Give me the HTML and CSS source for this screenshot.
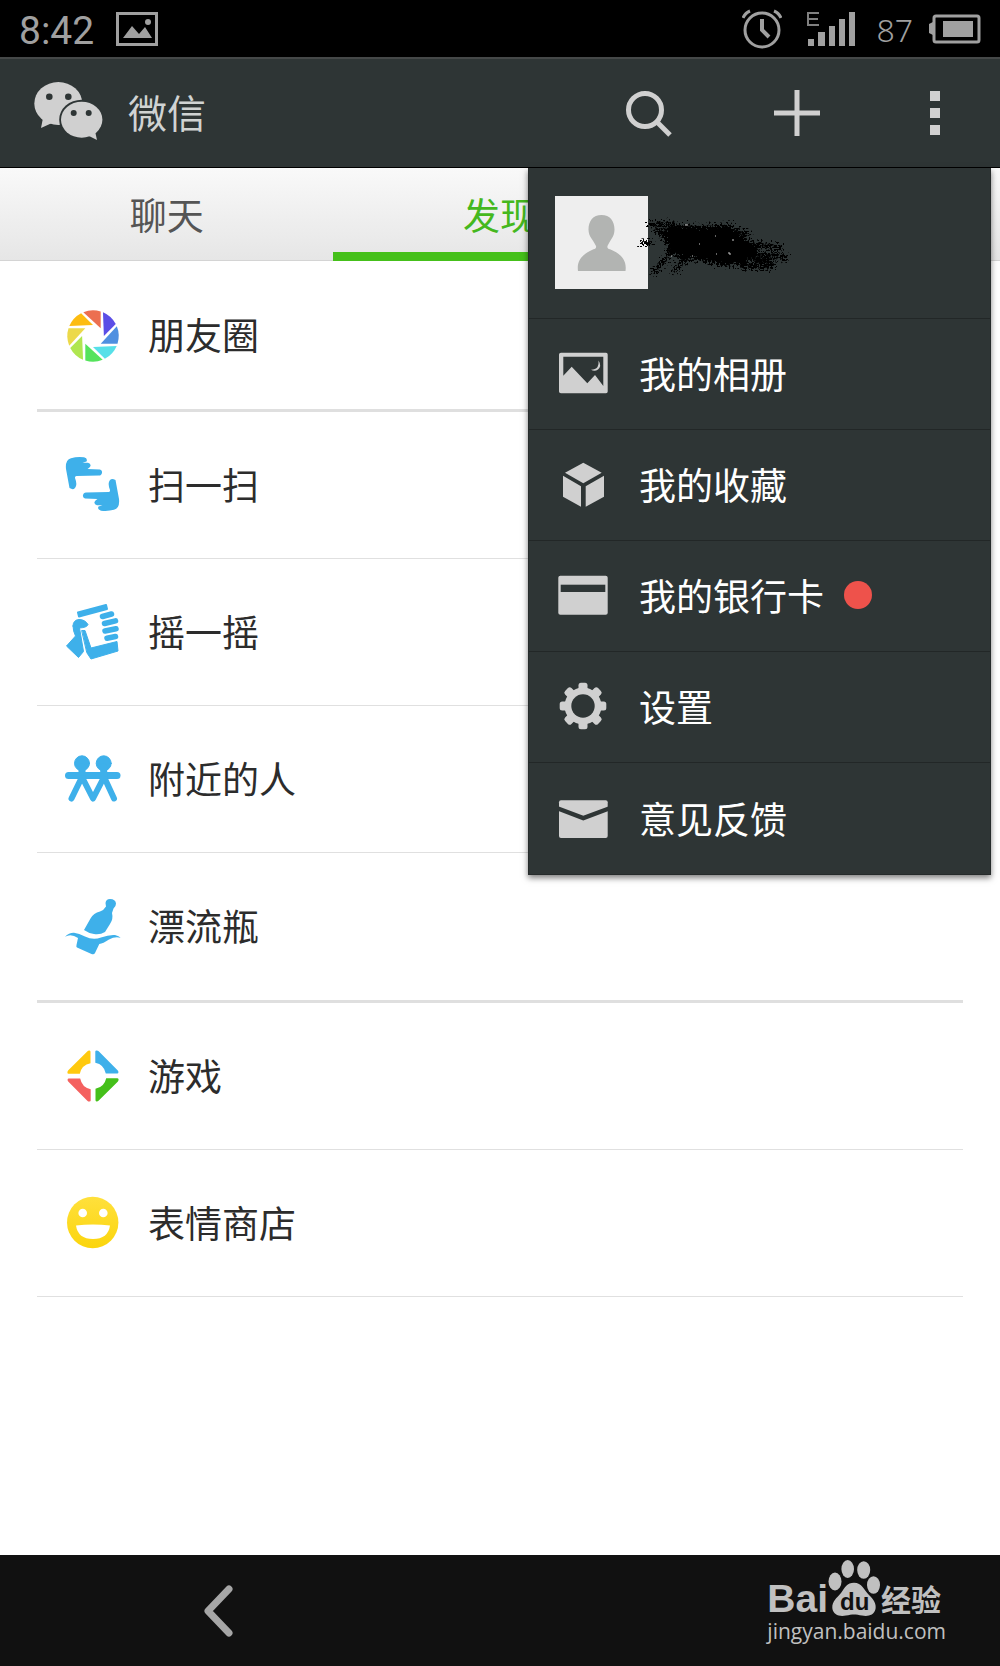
FILE: index.html
```html
<!DOCTYPE html>
<html lang="zh-CN">
<head>
  <meta charset="UTF-8" />
  <meta name="viewport" content="width=device-width, initial-scale=1.0"/>
  <title>微信</title>
  <link rel="stylesheet" href="styles.css">
</head>
<body>
  <div class="status-bar">
    <span class="clock">8:42</span>
    <svg class="status-picture" width="42" height="34" viewBox="0 0 42 34" fill="#a0a0a0">
      <path d="M0 0h42v34H0zM3 3v28h36V3z" fill-rule="evenodd"/>
      <path d="M7 26 16 14l7 8 6-7 7 11z"/>
      <circle cx="32" cy="10" r="3"/>
    </svg>
    <div class="status-right">
      <svg width="40" height="40" viewBox="0 0 40 40" fill="none" stroke="#a0a0a0" stroke-width="3">
        <circle cx="20" cy="21" r="17"/>
        <path d="M20 10v11l7 7" stroke-width="4"/>
        <path d="M1 9Q3 4 8 2M39 9Q37 4 32 2" stroke-width="3"/>
      </svg>
      <svg width="50" height="34" viewBox="0 0 50 34" fill="#a0a0a0">
        <path d="M13 1H2V13H13M2 7H12" fill="none" stroke="#808080" stroke-width="2"/>
        <path d="M2 27h6v7H2zM12 20h7v14h-7zM23 14h6v20h-6zM33 7h6v27h-6zM43 0h6v34h-6z"/>
      </svg>
      <span class="battery-level">87</span>
      <svg width="52" height="30" viewBox="0 0 52 30">
        <rect x="5" y="2" width="45" height="26" rx="2" fill="none" stroke="#a0a0a0" stroke-width="3"/>
        <path d="M4 8 0 10v9l4 2z" fill="#a0a0a0"/>
        <rect x="14" y="7" width="30" height="16" fill="#a0a0a0"/>
      </svg>
    </div>
  </div>

  <header class="app-bar">
    <svg class="logo" width="69" height="59" viewBox="0 0 69 59">
      <g fill="#d0d0d0">
        <ellipse cx="24.3" cy="21.5" rx="24" ry="21.5"/>
        <path d="M9 36 7 46l11-5z"/>
      </g>
      <g fill="#2e3535">
        <circle cx="15.3" cy="14.7" r="3.3"/>
        <circle cx="34.3" cy="14.7" r="3.3"/>
        <ellipse cx="47.7" cy="37.7" rx="22.5" ry="20"/>
      </g>
      <ellipse cx="47.7" cy="37.7" rx="20.7" ry="18" fill="#d0d0d0"/>
      <path d="m55 54 8 4-2-9z" fill="#d0d0d0"/>
      <circle cx="39.7" cy="31" r="3" fill="#2e3535"/>
      <circle cx="54.7" cy="31" r="3" fill="#2e3535"/>
    </svg>
    <h1>微信</h1>
    <button class="bar-button" aria-label="搜索">
      <svg width="48" height="48" viewBox="0 0 48 48" fill="none" stroke="#d0d0d0" stroke-width="5">
        <circle cx="20" cy="21" r="16.5"/>
        <path d="M32 33 45 46"/>
      </svg>
    </button>
    <button class="bar-button" aria-label="添加">
      <svg width="48" height="48" viewBox="0 0 48 48" fill="none" stroke="#d0d0d0" stroke-width="5">
        <path d="M24 1v46M1 24h46"/>
      </svg>
    </button>
    <button class="bar-button more" aria-label="更多">
      <svg width="14" height="46" viewBox="0 0 14 46" fill="#d0d0d0">
        <path d="M1 1h10v10H1zM1 18h10v10H1zM1 35h10v10H1z"/>
      </svg>
    </button>
  </header>

  <div class="content">
    <nav class="tabs">
      <button class="tab">聊天</button>
      <button class="tab active">发现</button>
    </nav>

    <main class="list">
      <a href="#" class="row group-end">
        <svg class="icon" viewBox="-28 -28 56 56">
          <defs><path id="blade" d="M-9.7-23.8A25.7 25.7 0 0 1 7.7-24.5V-7.7Z"/></defs>
          <use href="#blade" fill="#ec6f50"/>
          <use href="#blade" fill="#5b4ee6" transform="rotate(45)"/>
          <use href="#blade" fill="#4f90e0" transform="rotate(90)"/>
          <use href="#blade" fill="#57e0e8" transform="rotate(135)"/>
          <use href="#blade" fill="#55e35c" transform="rotate(180)"/>
          <use href="#blade" fill="#b0e650" transform="rotate(225)"/>
          <use href="#blade" fill="#ecd94a" transform="rotate(270)"/>
          <use href="#blade" fill="#fdbc10" transform="rotate(315)"/>
        </svg>
        <span>朋友圈</span>
      </a>
      <a href="#" class="row">
        <svg class="icon" viewBox="0 0 56 56" fill="#3eb0ea">
          <defs><path id="hand" d="M4.500 31 1 12Q0 3 6 1.200 12-.5 19 .3 23 1.500 21.500 4.500L17.500 5.700H23Q26 6.500 25.500 9 24.500 11 22.500 12L35 12.500Q37.500 13.500 37 15.700 36.500 18.500 34 18.500L11.500 19Q9.800 19 10 21 12 26 11 29 9.500 34 4.500 31Z"/></defs>
          <use href="#hand"/>
          <use href="#hand" transform="rotate(180 27.5 27)"/>
        </svg>
        <span>扫一扫</span>
      </a>
      <a href="#" class="row">
        <svg class="icon" viewBox="0 0 56 56" fill="#3eb0ea" stroke="#3eb0ea" stroke-linejoin="round" stroke-linecap="round">
          <path d="m13 8.500 28-7.500 1 4-28 7.500z" stroke-width="2"/>
          <path d="M8 22Q8 16 14 15.500 20 15.500 23 20.500 22 23.500 14.500 24L18.500 47.500 13.500 53.500 1.500 42 10.500 32Q8 27 8 22Z" stroke-width="1"/>
          <path d="M17 26.500H20L26 44 52 37.500 53 47 26 55 22 49Z" stroke-width="1"/>
          <path d="m37.500 12.500 9-2.500M39.500 19.500l11-2.700M40 27l11-2.300M42 34.300l8.500-1.800" fill="none" stroke-width="5.500"/>
        </svg>
        <span>摇一摇</span>
      </a>
      <a href="#" class="row">
        <svg class="icon" viewBox="0 0 56 56" fill="#3eb0ea" stroke="#3eb0ea" stroke-linecap="round" stroke-linejoin="round">
          <circle cx="17" cy="12.300" r="7.500"/>
          <circle cx="38.700" cy="12.300" r="7.500"/>
          <path d="M3.500 24.500h48.500" stroke-width="7"/>
          <path d="M17 16v12M38.700 16v12" stroke-width="7"/>
          <path d="M16 28 6.500 47.500M18 28l10 19.500L38 28M40 28l9 19.500" fill="none" stroke-width="6"/>
        </svg>
        <span>附近的人</span>
      </a>
      <a href="#" class="row group-end">
        <svg class="icon" viewBox="0 0 56 56" fill="#3eb0ea">
          <path d="M40.500 4Q41 0 45 0 50.500 0 51 4.500 51 7.500 48.500 9.500L47 14Q48.500 20 45 25L40 33Q35 36 29 35 24 34.500 19 31L25.500 19.500Q28.500 14 35 12.500 39 11 41 7.500Z"/>
          <path d="M0 37.700Q4 33.500 9 33.700 14 34.500 20 37.500 28 41.500 36 38.500 44 35.500 50 36 54 37 55.700 38.700 50 37 44 40.500 38 44.500 34.300 45L30 54Q29 56 26.500 55L12 48.500Q11 48 11.500 46L13 39Q6 34 0 37.700Z"/>
        </svg>
        <span>漂流瓶</span>
      </a>
      <a href="#" class="row">
        <svg class="icon" viewBox="-28 -28 56 56">
          <defs><path id="wedge" d="M2.300-24.500Q2.300-25.700 3.800-25.600 4.800-25.500 5.700-24.700L24.800-5.500Q25.600-4.600 25.400-3.500 25.200-2.500 24.300-2.500H12.800A13.500 13.500 0 0 0 2.300-13.200Z"/></defs>
          <use href="#wedge" fill="#3eb0ea"/>
          <use href="#wedge" fill="#45c01a" transform="rotate(90)"/>
          <use href="#wedge" fill="#f4615f" transform="rotate(180)"/>
          <use href="#wedge" fill="#ffc90e" transform="rotate(270)"/>
        </svg>
        <span>游戏</span>
      </a>
      <a href="#" class="row">
        <svg class="icon" viewBox="0 0 56 56">
          <defs>
            <linearGradient id="smile" x1="0" y1="0" x2="0" y2="1">
              <stop offset="0" stop-color="#ffe03c"/>
              <stop offset="1" stop-color="#fbd50c"/>
            </linearGradient>
          </defs>
          <circle cx="27.700" cy="27.500" r="25.700" fill="url(#smile)"/>
          <g fill="#fff">
            <circle cx="17.700" cy="18" r="4.300"/>
            <circle cx="38.300" cy="18" r="4.300"/>
            <path d="M11 30.500Q28 28.500 45 30.500 43 44 28 44 13 44 11 30.500Z"/>
          </g>
        </svg>
        <span>表情商店</span>
      </a>
    </main>

    <div class="menu">
      <button class="profile" aria-label="个人信息">
        <svg class="avatar" viewBox="0 0 93 93">
          <rect width="93" height="93" fill="#eee"/>
          <path d="M46.500 19C55 19 59.500 25 59.500 33.500 59.500 41 55 44 52.500 50 52 52 53 52.500 55 53.300 66 58 72 64 70.500 75H23C21.500 64 28 58 38.500 53.300 40.500 52.500 41.500 52 41 50 38.500 44 33.500 41 33.500 33.500 33.500 25 38 19 46.500 19Z" fill="#b2b4b2"/>
        </svg>
        <svg class="scribble" width="160" height="74" viewBox="0 0 160 74">
          <defs>
            <filter id="rough" x="-10%" y="-20%" width="120%" height="140%">
              <feTurbulence type="fractalNoise" baseFrequency="0.5" numOctaves="3" seed="4"/>
              <feDisplacementMap in="SourceGraphic" scale="18" xChannelSelector="R" yChannelSelector="G"/>
            </filter>
          </defs>
          <g filter="url(#rough)">
            <path d="M24 19 42 15 66 16 94 14 100 24 112 30 122 38 118 48 104 54 86 56 60 50 44 49 32 42Z"/>
            <g fill="none" stroke="#000" stroke-linecap="round">
              <path d="M14 14 40 14M32 44 18 62M48 50 38 60M20 20 30 30" stroke-width="5" stroke-dasharray="2 5"/>
              <path d="M98 22 114 24M112 34 142 38M118 44 150 48M106 56 134 56M120 50 136 51" stroke-width="6" stroke-dasharray="3 6"/>
              <path d="M4 33h9" stroke-width="4" stroke-dasharray="1 3"/>
            </g>
          </g>
          <path d="M48 15h3M78 26h1M62 34h1M34 46h1M55 46h1M79 44h1M91 43h2v2M95 30h2" stroke="#c8c8c8" fill="none"/>
        </svg>
      </button>
      <button class="menu-item">
        <svg class="icon" viewBox="0 0 56 56" fill="#d0d0d0">
          <path fill-rule="evenodd" d="M6 5.700H51Q52.700 5.700 52.700 7.500V44.500Q52.700 46.300 51 46.300H6Q4 46.300 4 44.500V7.500Q4 5.700 6 5.700ZM8.300 9.700V28.700L16.700 19.700 32.300 36.300 40 28 48.300 39V9.700Z"/>
          <path d="M43.500 13.500Q47 19 43 22.500 39.500 25 36 22.700 40.500 22.700 42.500 20 44 17.500 43.500 13.500Z"/>
        </svg>
        <span>我的相册</span>
      </button>
      <button class="menu-item">
        <svg class="icon" viewBox="0 0 56 56" fill="#d0d0d0">
          <path d="M28.300 4.700 46.700 14.700 28.300 25.300 10 14.700zM8 17.700l18 10.600v20.400L8 38.700zM30.700 28.300 49 17.700v21L30.700 48.700z"/>
        </svg>
        <span>我的收藏</span>
      </button>
      <button class="menu-item">
        <svg class="icon" viewBox="0 0 56 56">
          <rect x="3.300" y="6.700" width="49.400" height="39" rx="2" fill="#d0d0d0"/>
          <rect x="5.700" y="15.700" width="44.600" height="7.300" fill="#2e3535"/>
        </svg>
        <span>我的银行卡</span>
        <i class="dot"></i>
      </button>
      <button class="menu-item">
        <svg class="icon" viewBox="-28 -26 56 56">
          <defs><rect id="tooth" x="-4.500" y="-23.300" width="9" height="46.600" rx="2.500"/></defs>
          <g fill="#d0d0d0">
            <circle r="18.500"/>
            <use href="#tooth"/>
            <use href="#tooth" transform="rotate(45)"/>
            <use href="#tooth" transform="rotate(90)"/>
            <use href="#tooth" transform="rotate(135)"/>
          </g>
          <circle r="11.700" fill="#2e3535"/>
        </svg>
        <span>设置</span>
      </button>
      <button class="menu-item">
        <svg class="icon" viewBox="0 0 56 56">
          <rect x="4" y="9.300" width="48.700" height="37.700" rx="2" fill="#d0d0d0"/>
          <path d="M3 17.500 28.300 27 54 17.500" fill="none" stroke="#2e3535" stroke-width="4.500"/>
        </svg>
        <span>意见反馈</span>
      </button>
    </div>
  </div>

  <footer class="nav-bar">
    <button class="back" aria-label="返回">
      <svg width="30" height="52" viewBox="0 0 30 52" fill="none" stroke="#a6a6a6" stroke-width="7" stroke-linecap="round" stroke-linejoin="round">
        <path d="M25 4 4 26l21 22"/>
      </svg>
    </button>
    <div class="watermark">
      <div class="brand">
        <span class="bai">Bai</span>
        <svg width="53" height="57" viewBox="0 0 53 57">
          <g fill="#c0c0c0">
            <ellipse cx="7" cy="21.500" rx="6.500" ry="9"/>
            <ellipse cx="19.700" cy="9" rx="6.300" ry="9"/>
            <ellipse cx="35.700" cy="10" rx="6.500" ry="8.700"/>
            <ellipse cx="45.500" cy="25" rx="6.500" ry="8.700"/>
            <path d="M26 22.700C34 22.700 36 30 41 35 46 40 48.500 44 47.500 49 46 56 39 56.500 34 55.500 28 54 24 54 18 55.500 12 57 5 55 4.300 48 4 41 9 38 13 33 17 27 19 22.700 26 22.700Z"/>
          </g>
          <text x="12" y="50" class="du">du</text>
        </svg>
        <span class="jingyan">经验</span>
      </div>
      <div class="site">jingyan.baidu.com</div>
    </div>
  </footer>
</body>
</html>
```
FILE: styles.css
```css
* {
  box-sizing: border-box;
}

body {
  margin: 0;
  min-height: 100vh;
  display: flex;
  flex-direction: column;
  background-color: #fff;
  font-family: "Noto Sans CJK SC", "Noto Sans", sans-serif;
  font-size: 37px;
}

button {
  margin: 0;
  padding: 0;
  border: none;
  background: none;
  font: inherit;
  color: inherit;
  cursor: pointer;
}

svg {
  display: block;
  flex: none;
}

.status-bar {
  display: flex;
  align-items: center;
  height: 57px;
  padding: 0 19px;
  background-color: #000;
  color: #a0a0a0;
}

.clock {
  font-family: Roboto, sans-serif;
  font-size: 39px;
  line-height: 56px;
  padding-top: 4px;
}

.status-picture {
  margin-left: 22px;
}

.status-right {
  display: flex;
  align-items: center;
  margin-left: auto;
}

.battery-level {
  font-family: "Noto Sans", sans-serif;
  font-size: 32px;
  font-weight: 300;
  line-height: 56px;
  padding-top: 3px;
  margin: 0 16px 0 20px;
}

.status-right svg + svg {
  margin-left: 24px;
}

.app-bar {
  display: flex;
  align-items: center;
  height: 111px;
  padding-left: 34px;
  background-color: #2e3535;
  border-top: 2px solid #454848;
  border-bottom: 1px solid #000;
  color: #d0d3d3;
}

.logo {
  margin-bottom: 4px;
}

h1 {
  flex: 1;
  margin: 0 0 0 25px;
  padding-bottom: 5px;
  font-size: 39px;
  font-weight: 400;
}

.bar-button {
  display: flex;
  align-items: center;
  justify-content: center;
  width: 148px;
  height: 100%;
}

.more {
  width: 129px;
}

.content {
  position: relative;
  flex: 1;
}

.tabs {
  display: grid;
  grid-template-columns: repeat(3, 1fr);
  height: 93px;
  background: linear-gradient(#f9f9f9, #e6e6e6);
  border-bottom: 1px solid #d4d4d4;
}

.tab {
  height: 93px;
  padding-bottom: 2px;
  border-top: 9px solid transparent;
  border-bottom: 9px solid transparent;
  color: #555;
}

.tab.active {
  color: #45b81e;
  border-bottom-color: #45c01a;
}

.list {
  padding: 1px 37px;
}

.row {
  display: flex;
  align-items: center;
  gap: 27px;
  height: 147px;
  padding-left: 28px;
  border-bottom: 1px solid #e0e0e0;
  color: #2c2c2c;
  text-decoration: none;
}

.row span,
.menu-item span {
  padding-bottom: 3px;
}

.group-end {
  height: 150px;
  border-bottom: 3px solid #dfdfdf;
}

.icon {
  width: 56px;
  height: 56px;
}

/* dropdown over the list */
.menu {
  position: absolute;
  top: 0;
  right: 9px;
  width: 463px;
  background-color: #2e3535;
  border: 1px solid #262b2b;
  border-top: none;
  box-shadow: 0 3px 6px rgba(0, 0, 0, 0.5);
  color: #fff;
}

.profile {
  position: relative;
  display: block;
  width: 100%;
  height: 151px;
  padding: 0 26px 1px;
  border-bottom: 1px solid #222727;
}

.avatar {
  width: 93px;
  height: 93px;
}

.scribble {
  position: absolute;
  left: 108px;
  top: 42px;
}

.menu-item {
  display: flex;
  align-items: center;
  gap: 28px;
  width: 100%;
  height: 111px;
  padding: 1px 0 0 26px;
  border-bottom: 1px solid #222727;
}

.menu-item:last-child {
  border-bottom: none;
}

.dot {
  width: 28px;
  height: 28px;
  margin: 0 0 3px -8px;
  border-radius: 50%;
  background-color: #ee524b;
}

.nav-bar {
  display: flex;
  align-items: center;
  justify-content: space-between;
  height: 111px;
  padding: 0 54px 0 165px;
  background-color: #111;
}

.back {
  display: flex;
  align-items: center;
  justify-content: center;
  width: 108px;
  height: 100%;
}

.watermark {
  height: 100%;
  padding-top: 5px;
  color: #c0c0c0;
}

.brand {
  display: flex;
  align-items: flex-end;
}

.bai {
  font-family: "Liberation Sans", Arial, sans-serif;
  font-size: 39px;
  font-weight: 700;
  line-height: 36px;
}

.du {
  fill: #111;
  font-family: "Liberation Sans", Arial, sans-serif;
  font-size: 24px;
  font-weight: 700;
}

.jingyan {
  font-size: 30px;
  font-weight: 700;
  line-height: 38px;
}

.site {
  font-family: "Open Sans", "Noto Sans", sans-serif;
  font-size: 21px;
  line-height: 28px;
}
```
